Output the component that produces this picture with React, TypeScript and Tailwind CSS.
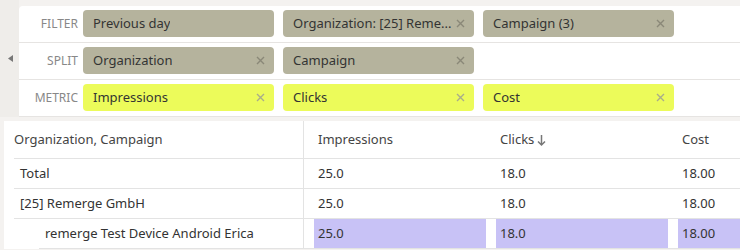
import React from "react";

const font = { fontFamily: '"Noto Sans", "Open Sans", sans-serif' };

function Close({ light }: { light?: boolean }) {
  return (
    <svg width="9" height="9" viewBox="0 0 9 9" className="shrink-0">
      <path d="M1 1L8 8M8 1L1 8" stroke={light ? "#a9ad8a" : "#8a8878"} strokeWidth="1.4" />
    </svg>
  );
}

type Pill = { text: string; closable?: boolean };

function Pill({ text, closable = true, yellow }: Pill & { yellow?: boolean }) {
  return (
    <div
      className={`w-[191px] h-[27px] rounded-[4px] flex items-center justify-between pl-[10px] pr-[9px] text-[13px] text-[#333] whitespace-pre ${
        yellow ? "bg-[#ecfb5a]" : "bg-[#b5b39d]"
      }`}
    >
      <span className="truncate">{text}</span>
      {closable && <Close light={yellow} />}
    </div>
  );
}

function ShelfRow({ label, pills, yellow }: { label: string; pills: Pill[]; yellow?: boolean }) {
  return (
    <div className="h-[37px] flex items-start pt-[4px] border-b border-[#e6e4e2]">
      <div className="w-[59px] text-right text-[12px] text-[#888] leading-[27px]">{label}</div>
      <div className="flex gap-[9px] ml-[5px]">
        {pills.map((p) => (
          <Pill key={p.text} {...p} yellow={yellow} />
        ))}
      </div>
    </div>
  );
}

const rows = [
  { name: "Total", indent: 10, vals: ["25.0", "18.0", "18.00"] },
  { name: "[25] Remerge GmbH", indent: 10, vals: ["25.0", "18.0", "18.00"] },
  { name: "remerge Test Device Android Erica", indent: 35, vals: ["25.0", "18.0", "18.00"], hl: true },
];

export default function App() {
  return (
    <div className="w-[740px] h-[250px] overflow-hidden bg-[#f4f2f0] relative" style={font}>
      {/* shelf */}
      <div className="flex">
        <div className="w-[19px] h-[117px] bg-[#efedea] flex items-center justify-center pl-[1px]">
          <svg width="5" height="7" viewBox="0 0 5 7">
            <path d="M5 0L0 3.5L5 7Z" fill="#777" />
          </svg>
        </div>
        <div className="flex-1 mt-[6px] bg-white rounded-tl-[4px]">
          <ShelfRow
            label="FILTER"
            pills={[
              { text: "Previous day", closable: false },
              { text: "Organization:  [25] Reme..." },
              { text: "Campaign  (3)" },
            ]}
          />
          <ShelfRow label="SPLIT" pills={[{ text: "Organization" }, { text: "Campaign" }]} />
          <ShelfRow label="METRIC" yellow pills={[{ text: "Impressions" }, { text: "Clicks" }, { text: "Cost" }]} />
        </div>
      </div>

      {/* table */}
      <div className="ml-[4px] mt-[4px] bg-white text-[13px] text-[#333]">
        <div className="flex h-[38px]">
          <div className="w-[300px] shrink-0 border-r border-[#e3e3e3]">
            <div className="ml-[10px] h-full border-b border-[#e3e3e3] flex items-center text-[#444]">Organization, Campaign</div>
          </div>
          {["Impressions", "Clicks", "Cost"].map((h) => (
            <div key={h} className="w-[182px] shrink-0 border-b border-[#e3e3e3] pl-[14px] flex items-center text-[#444]">
              {h}
              {h === "Clicks" && (
                <svg width="9" height="13" viewBox="0 0 9 13" className="ml-[3px] mt-[2px]">
                  <path d="M4.5 1V11M1 7.5L4.5 11L8 7.5" stroke="#777" strokeWidth="1.5" fill="none" />
                </svg>
              )}
            </div>
          ))}
        </div>
        {rows.map((r) => (
          <div key={r.name} className="flex h-[30px]">
            <div className="w-[300px] shrink-0 border-r border-[#e3e3e3]">
              <div className="h-full border-b border-[#e3e3e3] flex items-center pl-[6px] whitespace-nowrap" style={{ marginLeft: r.indent }}>
                {r.name}
              </div>
            </div>
            {r.vals.map((v, i) => (
              <div key={i} className="w-[182px] shrink-0 border-b border-[#e3e3e3] pl-[10px]">
                <div className={`h-full flex items-center pl-[4px] ${r.hl ? "bg-[#c8c2f6]" : ""}`}>{v}</div>
              </div>
            ))}
          </div>
        ))}
      </div>
    </div>
  );
}
